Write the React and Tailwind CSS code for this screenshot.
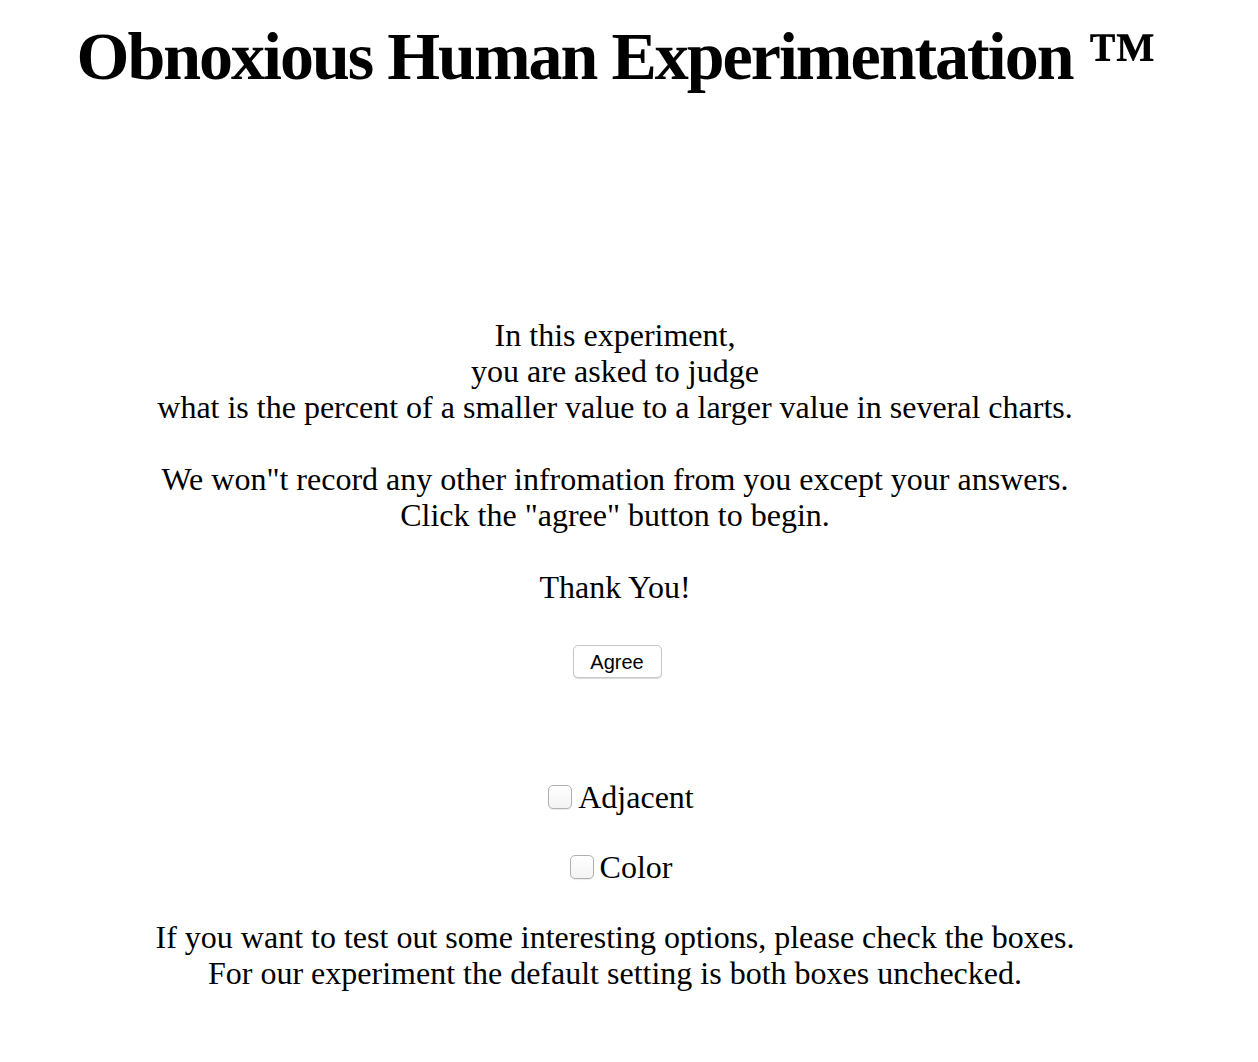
export default function App() {
  return (
    <div className="w-[1230px] bg-white text-black text-center" style={{ fontFamily: '"Liberation Serif", serif' }}>
      <h1 className="pt-[13px] text-[68px] font-bold leading-[87px] tracking-[-2px]">Obnoxious Human Experimentation ™</h1>
      <div className="mt-[217px] text-[32px] leading-[36px]">
        <p>In this experiment,</p>
        <p>you are asked to judge</p>
        <p>what is the percent of a smaller value to a larger value in several charts.</p>
        <p className="mt-[36px]">We won"t record any other infromation from you except your answers.</p>
        <p>Click the "agree" button to begin.</p>
        <p className="mt-[36px]">Thank You!</p>
      </div>
      <div className="mt-[40px] flex justify-center">
        <button className="ml-[4px] h-[33px] w-[89px] rounded-[5px] border border-[#c8c8c8] bg-white text-[20px] shadow-[0_1px_1px_rgba(0,0,0,0.15)]" style={{ fontFamily: '"Liberation Sans", sans-serif' }}>Agree</button>
      </div>
      <div className="mt-[101px] text-[32px] leading-[36px]">
        <label className="ml-[12px] flex items-center justify-center gap-[6px]">
          <span className="h-[24px] w-[24px] rounded-[5px] border border-[#b0b0b0] bg-gradient-to-b from-white to-[#f4f4f4] shadow-[0_1px_1px_rgba(0,0,0,0.08)]"></span>
          Adjacent
        </label>
        <label className="ml-[12px] mt-[34px] flex items-center justify-center gap-[6px]">
          <span className="h-[24px] w-[24px] rounded-[5px] border border-[#b0b0b0] bg-gradient-to-b from-white to-[#f4f4f4] shadow-[0_1px_1px_rgba(0,0,0,0.08)]"></span>
          Color
        </label>
        <p className="mt-[34px]">If you want to test out some interesting options, please check the boxes.</p>
        <p>For our experiment the default setting is both boxes unchecked.</p>
      </div>
    </div>
  );
}
